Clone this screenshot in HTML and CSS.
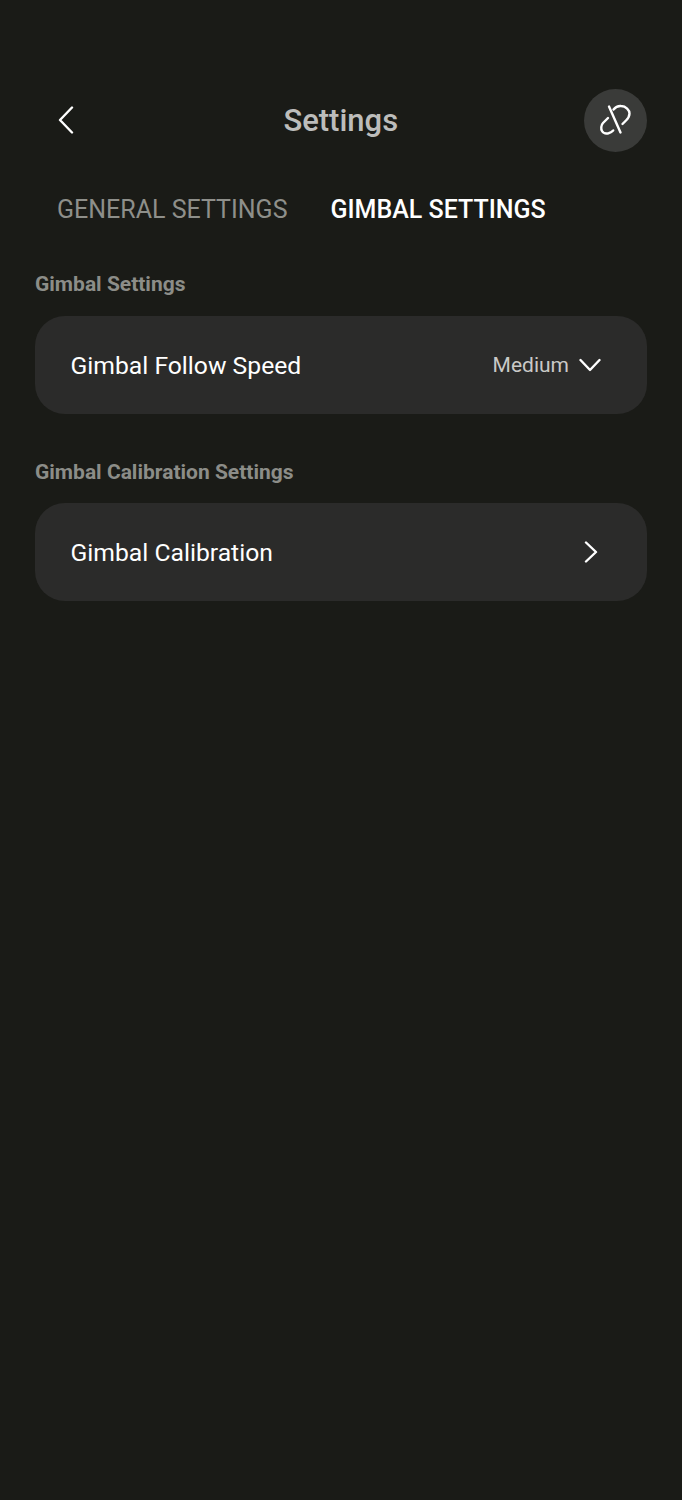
FILE: index.html
```html
<!DOCTYPE html>
<html lang="en">
<head>
<meta charset="utf-8">
<title>Settings</title>
<link rel="stylesheet" href="styles.css">
</head>
<body>
<main class="screen">
  <header class="topbar">
    <button class="back" aria-label="Back">
      <svg width="16" height="28" viewBox="0 0 16 28"><path d="M14 1.500L2 14L14 26.500" class="stroke"/></svg>
    </button>
    <h1 class="title">Settings</h1>
    <button class="link" aria-label="Connection">
      <svg width="32" height="32" viewBox="0 0 32 32">
        <path d="M10 2.500L21.500 28.500" class="stroke"/>
        <path d="M14.500 5.500C16.500 3 19 1.800 22 2C27 2.200 30.500 6 30.500 9.500C30.500 12 29 14.500 27 16.500L23.500 20" class="stroke"/>
        <path d="M9 14L4 19C2 21 1.800 25 3 27C4.500 29.500 7.500 29.800 9.500 29.300C11 29 12.800 28 14.200 26.500" class="stroke"/>
      </svg>
    </button>
  </header>
  <nav class="tabs">
    <span class="tab">GENERAL SETTINGS</span>
    <span class="tab active">GIMBAL SETTINGS</span>
  </nav>
  <section class="group">
    <h2 class="group-title">Gimbal Settings</h2>
    <div class="row">
      <span class="row-label">Gimbal Follow Speed</span>
      <span class="row-value">Medium</span>
      <svg class="chevron-down" width="22" height="14" viewBox="0 0 22 14"><path d="M1.500 2L11 12L20.500 2" class="stroke"/></svg>
    </div>
  </section>
  <section class="group">
    <h2 class="group-title">Gimbal Calibration Settings</h2>
    <div class="row">
      <span class="row-label">Gimbal Calibration</span>
      <svg class="chevron-right" width="14" height="22" viewBox="0 0 14 22"><path d="M2 1.500L12 11L2 20.500" class="stroke"/></svg>
    </div>
  </section>
</main>
</body>
</html>
```
FILE: styles.css
```css
* { box-sizing: border-box; }
html, body { margin: 0; padding: 0; }
body {
  background: #1a1b17;
  font-family: Roboto, "Liberation Sans", sans-serif;
  color: #fff;
}
.screen { height: 1500px; padding: 88px 35.500px 0 35px; overflow: hidden; }
.stroke { fill: none; stroke: currentColor; stroke-width: 2.400; stroke-linecap: round; stroke-linejoin: round; }
.topbar { display: flex; align-items: center; justify-content: space-between; height: 64px; position: relative; }
.back { margin-left: 23px; padding: 0; border: 0; background: none; color: #fff; display: flex; }
.title { position: absolute; left: 0; right: 0; margin: 0; text-align: center; font-size: 31px; font-weight: 500; color: #bdbdbb; pointer-events: none; }
.link { width: 63px; height: 63px; border-radius: 50%; border: 0; padding: 0; background: #3a3b39; color: #fff; display: flex; align-items: center; justify-content: center; }
.tabs { display: flex; gap: 43px; padding-left: 22px; margin-top: 41px; height: 34px; align-items: center; }
.tab { font-size: 25px; color: #8e8f8a; font-weight: 400; line-height: 34px; }
.tab.active { color: #fff; font-weight: 500; }
.group { margin-top: 42px; }
.group + .group { margin-top: 43px; }
.group-title { margin: 0 0 17px; font-size: 21px; line-height: 30px; font-weight: 700; color: #8c8d88; }
.group + .group .group-title { margin-bottom: 16px; }
.row { height: 98px; border-radius: 30px; background: #2b2b2a; display: flex; align-items: center; padding: 0 45.500px 0 35.500px; }
.row-label { flex: 1; font-size: 24.700px; font-weight: 400; color: #fff; }
.row-value { font-size: 21px; color: #c9c9c7; margin-right: 10px; }
.chevron-down, .chevron-right { color: #fff; }
.chevron-right { margin-right: 3px; }
```
